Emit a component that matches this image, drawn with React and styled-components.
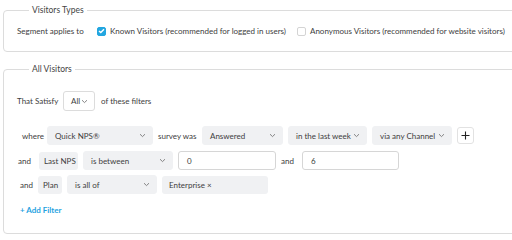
import styled, { createGlobalStyle } from "styled-components";

const Global = createGlobalStyle`
  body {
    margin: 0;
    background: #fff;
    font-family: "Lato", "Open Sans", sans-serif;
    color: #404040;
    overflow: hidden;
  }
`;

const Page = styled.div`
  width: 512px;
  height: 240px;
  padding-top: 5px;
  box-sizing: border-box;
  overflow: hidden;
`;

const Section = styled.fieldset`
  margin: 0 0 0 3px;
  width: 530px;
  box-sizing: border-box;
  border: 1px solid #dcdcdc;
  border-radius: 4px;
  padding: ${(p) => p.$pad};
  & + & {
    margin-top: 12px;
  }
`;

const Legend = styled.legend`
  font-size: 8.5px;
  color: #444;
  padding: 0 3px;
  margin-left: 12px;
  line-height: 10px;
`;

const Row = styled.div`
  display: flex;
  align-items: center;
  gap: ${(p) => p.$gap ?? 5}px;
  padding-left: ${(p) => p.$indent || 0}px;
  margin-bottom: ${(p) => p.$mb || 0}px;
  font-size: 8px;
`;

const Label = styled.span`
  width: ${(p) => (p.$w ? `${p.$w}px` : "auto")};
  flex: none;
  font-size: 8px;
  color: #404040;
  white-space: nowrap;
`;

const Check = styled.span`
  width: 9px;
  height: 9px;
  border-radius: 2px;
  box-sizing: border-box;
  display: inline-flex;
  align-items: center;
  justify-content: center;
  background: ${(p) => (p.$on ? "#22a6e0" : "#fff")};
  border: 1px solid ${(p) => (p.$on ? "#22a6e0" : "#d4d4d4")};
  margin-right: 4px;
`;

const Option = styled.label`
  width: ${(p) => (p.$w ? `${p.$w}px` : "auto")};
  flex: none;
  display: flex;
  align-items: center;
  white-space: nowrap;
`;

const Select = styled.div`
  width: ${(p) => p.$w}px;
  height: ${(p) => p.$h || 19}px;
  flex: none;
  box-sizing: border-box;
  display: flex;
  align-items: center;
  justify-content: space-between;
  padding: 0 6px 0 7px;
  border-radius: 3px;
  background: ${(p) => (p.$white ? "#fff" : "#f0f1f3")};
  border: 1px solid ${(p) => (p.$white ? "#dcdcdc" : "#f0f1f3")};
  font-size: 8px;
  color: #404040;
  white-space: nowrap;
`;

const Chevron = () => (
  <svg width="7" height="5" viewBox="0 0 7 5">
    <path d="M1 1.2 L3.5 3.6 L6 1.2" fill="none" stroke="#777" strokeWidth="0.9" />
  </svg>
);

const Chip = styled.div`
  width: ${(p) => p.$w}px;
  height: 18px;
  flex: none;
  box-sizing: border-box;
  display: flex;
  align-items: center;
  padding: 0 ${(p) => p.$px || 5}px;
  border-radius: 3px;
  background: #f0f1f3;
  font-size: 8px;
  white-space: nowrap;
`;

const Input = styled.div`
  width: ${(p) => p.$w}px;
  height: 19px;
  flex: none;
  box-sizing: border-box;
  border: 1px solid #d6d6d6;
  border-radius: 3px;
  display: flex;
  align-items: center;
  padding: 0 8px;
  font-size: 8px;
`;

const PlusButton = styled.div`
  width: 17px;
  height: 17px;
  flex: none;
  box-sizing: border-box;
  border: 1px solid #e2e2e2;
  border-radius: 3px;
  display: flex;
  align-items: center;
  justify-content: center;
`;

const AddFilter = styled.div`
  color: #1fa3df;
  font-size: 8px;
  font-weight: 700;
  padding-left: 3px;
  margin-top: 11px;
`;

export default function App() {
  return (
    <Page>
      <Global />
      <Section $pad="11px 13px 15px">
        <Legend>Visitors Types</Legend>
        <Row $gap={0}>
          <Label $w={80}>Segment applies to</Label>
          <Option $w={200}>
            <Check $on>
              <svg width="7" height="6" viewBox="0 0 7 6">
                <path d="M1 3 L2.8 4.6 L6 1.2" fill="none" stroke="#fff" strokeWidth="1.4" />
              </svg>
            </Check>
            Known Visitors (recommended for logged in users)
          </Option>
          <Option>
            <Check />
            Anonymous Visitors (recommended for website visitors)
          </Option>
        </Row>
      </Section>
      <Section $pad="17px 13px 18px">
        <Legend>All Visitors</Legend>
        <Row $gap={6} $mb={15}>
          <Label $w={40}>That Satisfy</Label>
          <Select $w={32} $h={20} $white>
            All <Chevron />
          </Select>
          <Label>of these filters</Label>
        </Row>
        <Row $indent={5} $mb={6}>
          <Label $w={20}>where</Label>
          <Select $w={106}>
            Quick NPS® <Chevron />
          </Select>
          <Label $w={39}>survey was</Label>
          <Select $w={81}>
            Answered <Chevron />
          </Select>
          <Select $w={79}>
            in the last week <Chevron />
          </Select>
          <Select $w={80}>
            via any Channel <Chevron />
          </Select>
          <PlusButton>
            <svg width="9" height="9" viewBox="0 0 9 9">
              <path d="M4.5 0.5 V8.5 M0.5 4.5 H8.5" stroke="#222" strokeWidth="1.1" />
            </svg>
          </PlusButton>
        </Row>
        <Row $indent={1} $mb={5}>
          <Label $w={16}>and</Label>
          <Chip $w={39}>Last NPS</Chip>
          <Select $w={90}>
            is between <Chevron />
          </Select>
          <Input $w={98}>0</Input>
          <Label $w={16}>and</Label>
          <Input $w={97}>6</Input>
        </Row>
        <Row $indent={3}>
          <Label $w={13}>and</Label>
          <Chip $w={24}>Plan</Chip>
          <Select $w={90}>
            is all of <Chevron />
          </Select>
          <Chip $w={106} $px={7}>Enterprise ×</Chip>
        </Row>
        <AddFilter>+ Add Filter</AddFilter>
      </Section>
    </Page>
  );
}
